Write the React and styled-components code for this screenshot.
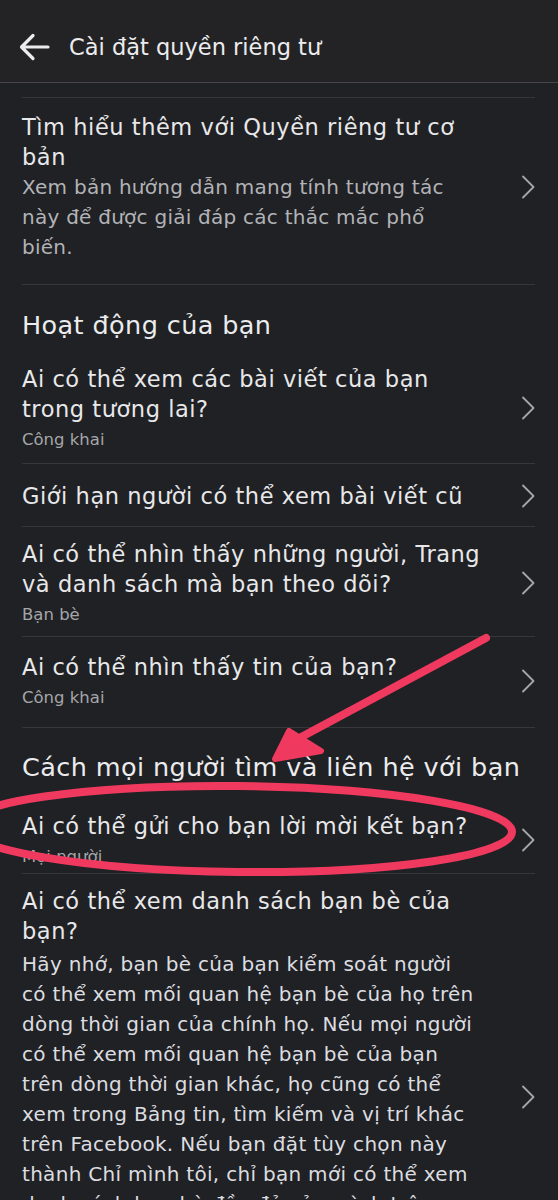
import styled, { createGlobalStyle } from "styled-components"

const GlobalStyle = createGlobalStyle`
  html, body {
    margin: 0;
    padding: 0;
    background: #202124;
    overflow: hidden;
  }
  * { box-sizing: border-box; }
`

const Page = styled.div`
  position: relative;
  width: 558px;
  height: 1200px;
  overflow: hidden;
  background: #202124;
  font-family: "DejaVu Sans", "Noto Sans", sans-serif;
  color: #e6e6e8;
`

const Header = styled.header`
  display: flex;
  align-items: center;
  gap: 19px;
  height: 83px;
  padding: 12px 0 0 18px;
  background: #232326;
  border-bottom: 1px solid #46464a;
`

const HeaderTitle = styled.h1`
  margin: 0;
  font-size: 22.5px;
  font-weight: 400;
  color: #ececee;
`

const List = styled.div`
  padding: 0 23px 0 22px;
`

const ScrollEdge = styled.div`
  height: 15px;
  border-bottom: 1px solid #35363a;
`

const Row = styled.div`
  display: flex;
  align-items: center;
  padding: ${(p) => p.$top}px 0 ${(p) => p.$bottom}px;
  border-bottom: 1px solid #36373a;
`

const RowText = styled.div`
  flex: 1;
  min-width: 0;
`

const Title = styled.div`
  font-size: 22.5px;
  line-height: 30px;
  letter-spacing: 0.55px;
  white-space: pre-line;
  color: #e8e8ea;
`

const Desc = styled.div`
  font-size: 20px;
  line-height: 30px;
  letter-spacing: ${(p) => (p.$bright ? 0.3 : 0.25)}px;
  white-space: pre-line;
  color: ${(p) => (p.$bright ? "#dcdde0" : "#b2b3b7")};
  margin-top: ${(p) => (p.$bright ? 3 : 0)}px;
`

const Sub = styled.div`
  font-size: 16.5px;
  line-height: 22px;
  margin-top: 5px;
  color: #a5a6aa;
`

const SectionHeading = styled.h2`
  margin: 0;
  padding: ${(p) => p.$top}px 0 ${(p) => p.$bottom}px;
  font-size: 25.5px;
  line-height: 34px;
  letter-spacing: 0.4px;
  font-weight: 400;
  white-space: nowrap;
  color: #ececee;
`

const ChevronBox = styled.div`
  flex: none;
  width: 14px;
  display: flex;
  justify-content: flex-end;
  margin-top: ${(p) => p.$offset || 0}px;
`

const Annotation = styled.svg`
  position: absolute;
  left: 0;
  top: 0;
  pointer-events: none;
`

function BackArrow() {
  return (
    <svg width="32" height="30" viewBox="0 0 32 30" fill="none">
      <path d="M30 15H4M15 3.5L3.5 15L15 26.5" stroke="#ececee" strokeWidth="3.2" strokeLinecap="round" strokeLinejoin="round" />
    </svg>
  )
}

function Chevron({ offset }) {
  return (
    <ChevronBox $offset={offset}>
      <svg width="14" height="24" viewBox="0 0 14 24" fill="none">
        <path d="M2 1.5L12.5 12L2 22.5" stroke="#a6a7ab" strokeWidth="1.8" strokeLinecap="round" strokeLinejoin="round" />
      </svg>
    </ChevronBox>
  )
}

function Item({ title, sub, desc, bright, top, bottom, offset }) {
  return (
    <Row $top={top} $bottom={bottom}>
      <RowText>
        <Title>{title}</Title>
        {sub && <Sub>{sub}</Sub>}
        {desc && <Desc $bright={bright}>{desc}</Desc>}
      </RowText>
      <Chevron offset={offset} />
    </Row>
  )
}

const friendsText =
  "Hãy nhớ, bạn bè của bạn kiểm soát người\n" +
  "có thể xem mối quan hệ bạn bè của họ trên\n" +
  "dòng thời gian của chính họ. Nếu mọi người\n" +
  "có thể xem mối quan hệ bạn bè của bạn\n" +
  "trên dòng thời gian khác, họ cũng có thể\n" +
  "xem trong Bảng tin, tìm kiếm và vị trí khác\n" +
  "trên Facebook. Nếu bạn đặt tùy chọn này\n" +
  "thành Chỉ mình tôi, chỉ bạn mới có thể xem\n" +
  "danh sách bạn bè đầy đủ của mình trên\n" +
  "dòng thời gian. Những người khác sẽ chỉ\n" +
  "thấy bạn chung."

export default function App() {
  return (
    <>
      <GlobalStyle />
      <Page>
        <Header>
          <BackArrow />
          <HeaderTitle>Cài đặt quyền riêng tư</HeaderTitle>
        </Header>
        <List>
          <ScrollEdge />
          <Item
            top={14}
            bottom={22}
            title={"Tìm hiểu thêm với Quyền riêng tư cơ\nbản"}
            desc={"Xem bản hướng dẫn mang tính tương tác\nnày để được giải đáp các thắc mắc phổ\nbiến."}
          />
          <SectionHeading $top={23} $bottom={8}>Hoạt động của bạn</SectionHeading>
          <Item top={14} bottom={12} title={"Ai có thể xem các bài viết của bạn\ntrong tương lai?"} sub="Công khai" />
          <Item top={17} bottom={15} title="Giới hạn người có thể xem bài viết cũ" />
          <Item top={12} bottom={10} title={"Ai có thể nhìn thấy những người, Trang\nvà danh sách mà bạn theo dõi?"} sub="Bạn bè" />
          <Item top={15} bottom={18} title="Ai có thể nhìn thấy tin của bạn?" sub="Công khai" />
          <SectionHeading $top={22} $bottom={13}>Cách mọi người tìm và liên hệ với bạn</SectionHeading>
          <Item top={14} bottom={5} title="Ai có thể gửi cho bạn lời mời kết bạn?" sub="Mọi người" />
          <Item
            top={12}
            bottom={40}
            offset={28}
            title={"Ai có thể xem danh sách bạn bè của\nbạn?"}
            desc={friendsText}
            bright
          />
        </List>
        <Annotation width="558" height="1200" viewBox="0 0 558 1200">
          <g stroke="#f0395f" fill="none" strokeLinecap="round" strokeLinejoin="round">
            <path d="M486 638L292 742" strokeWidth="8" />
            <path d="M275 759L289 731L321 751Z" fill="#f0395f" strokeWidth="6" />
            <ellipse cx="238" cy="829" rx="274" ry="43" strokeWidth="8" transform="rotate(0.6 238 829)" />
          </g>
        </Annotation>
      </Page>
    </>
  )
}
